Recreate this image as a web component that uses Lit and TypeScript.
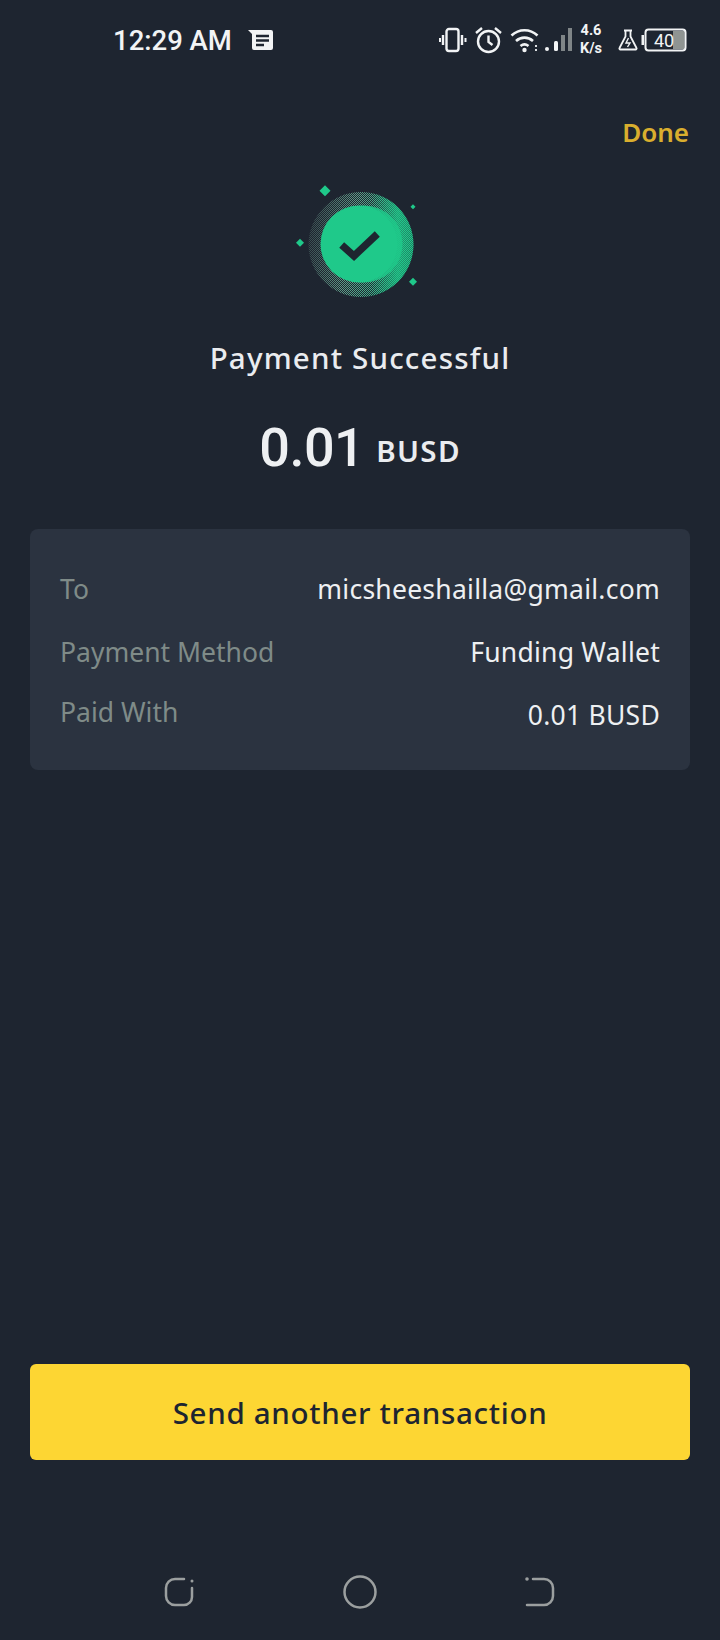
import { LitElement, html, css, svg } from "lit";
import { customElement } from "lit/decorators.js";

@customElement("app-root")
export class AppRoot extends LitElement {
  static styles = css`
    :host { display: block; width: 720px; height: 1640px; background: #1e2530; overflow: hidden; font-family: "Noto Sans", "Open Sans", sans-serif; color: #eaecef; }
    .page { display: flex; flex-direction: column; height: 1640px; }
    .status { height: 80px; display: flex; align-items: center; padding-left: 113px; flex: none; font-family: Roboto, sans-serif; color: #f2f4f5; }
    .time { font-size: 27.5px; font-weight: 500; width: 135px; white-space: nowrap; }
    .note { width: 26px; height: 24px; }
    .sicons { margin-left: auto; display: flex; align-items: center; padding-right: 33px; }
    .speed { font-size: 14.5px; font-weight: 700; line-height: 18px; text-align: center; width: 24px; margin: 0 15px 0 6px; }
    .done-row { display: flex; justify-content: flex-end; padding: 36px 31px 0 0; height: 56px; box-sizing: content-box; flex: none; }
    .done { color: #d9ae2e; font-size: 26px; font-weight: 600; line-height: 32px; }
    .badge { display: block; margin: 10px auto 0; width: 140px; height: 120px; flex: none; }
    .title { margin-top: 36px; text-align: center; font-size: 29.5px; font-weight: 500; line-height: 40px; letter-spacing: 1.2px; }
    .amount { display: flex; justify-content: center; align-items: baseline; gap: 12px; margin-top: 37px; line-height: 66px; }
    .num { font-family: Roboto, sans-serif; font-size: 54px; font-weight: 500; letter-spacing: -0.5px; color: #eef0f2; }
    .unit { font-size: 29.5px; font-weight: 600; letter-spacing: 1.3px; position: relative; top: -4px; }
    .card { margin: 41px 30px 0; background: #2b3340; border-radius: 8px; height: 241px; box-sizing: border-box; padding: 40px 30px; display: flex; flex-direction: column; gap: 23px; flex: none; }
    .row { display: flex; justify-content: space-between; font-size: 26.5px; line-height: 40px; }
    .lab { color: #7f8b88; }
    .val { color: #eef0f2; letter-spacing: 0.25px; }
    .raised { margin-top: -3px; }
    .btn { margin: auto 30px 0; height: 96px; border-radius: 6px; background: #fdd633; border: 0; color: #1e2530; font-family: inherit; font-size: 29.5px; font-weight: 500; letter-spacing: 0.7px; flex: none; }
    .nav { height: 180px; display: flex; align-items: flex-end; justify-content: space-between; padding: 0 163px 31px; box-sizing: border-box; flex: none; }
    .nav svg { width: 34px; height: 34px; display: block; }
  `;

  render() {
    return html`<div class="page">
      <div class="status">
        <span class="time">12:29 AM</span>
        <svg class="note" viewBox="0 0 26 24"><path fill="#f2f4f5" d="M0 2h23a2 2 0 0 1 2 2v16a2 2 0 0 1-2 2H6a2 2 0 0 1-2-2V6z"/><path stroke="#1e2530" stroke-width="2.400" d="M8 8h13M8 12.500h13M8 17h8"/></svg>
        <div class="sicons">
          <svg width="28" height="26" viewBox="0 0 28 26" fill="none" stroke="#f2f4f5"><rect x="7.500" y="2" width="12" height="22" rx="2.500" stroke-width="2.400"/><path stroke-width="2.400" d="M4 8v10M23 8v10"/><path stroke-width="2" d="M1 11v4M26.500 11v4"/></svg>
          <svg style="margin-left:7px" width="29" height="28" viewBox="0 0 29 28" fill="none" stroke="#f2f4f5" stroke-width="2.400"><circle cx="14.500" cy="15.500" r="10.500"/><path d="M14.500 9.500v6.500l4 3M2 7l6-5M27 7l-6-5"/></svg>
          <svg style="margin-left:7px" width="31" height="26" viewBox="0 0 31 26" fill="none" stroke="#f2f4f5" stroke-width="2.600"><path d="M1.500 8.500C9 1.500 20 1.500 27.500 8.500M6 14c5-4.500 12-4.500 17 0M10.500 19c2.500-2 5.500-2 8 0"/><circle cx="14.500" cy="23" r="2.200" fill="#f2f4f5" stroke="none"/><path stroke-width="1.800" d="M26 18v2M26 22v2"/></svg>
          <svg style="margin-left:2px" width="30" height="26" viewBox="0 0 30 26"><circle cx="4" cy="22" r="2" fill="#f2f4f5"/><rect x="11" y="14" width="4" height="10" rx="1.500" fill="#f2f4f5"/><rect x="18" y="8" width="4" height="16" fill="#7f8587"/><rect x="25" y="1" width="4" height="23" fill="#7f8587"/></svg>
          <div class="speed">4.6<br />K/s</div>
          <svg width="20" height="22" viewBox="0 0 20 22" fill="none" stroke="#f2f4f5" stroke-width="1.800"><path d="M6 1.500h8M7.500 1.500v6L1.500 19a1 1 0 0 0 1 1.500h15a1 1 0 0 0 1-1.500l-6-11.500v-6"/><path d="M10.500 9l-2.500 5h4l-2.500 4" stroke-width="1.400"/></svg>
          <svg style="margin-left:3px" width="46" height="24" viewBox="0 0 46 24">
            <rect x="0.500" y="7" width="2.500" height="10" fill="#f2f4f5"/>
            <rect x="32" y="3" width="11.500" height="18" fill="#8f9492"/>
            <rect x="4.500" y="1.500" width="40" height="21" rx="3" fill="none" stroke="#f2f4f5" stroke-width="2"/>
            ${svg`<text x="13" y="19" font-family="Roboto, sans-serif" font-size="18" fill="#f2f4f5">40</text>`}
          </svg>
        </div>
      </div>

      <div class="done-row"><span class="done">Done</span></div>

      <svg class="badge" viewBox="0 0 140 120">
        <defs>
          <linearGradient id="fade" x1="0" y1="0" x2="1" y2="0.150">
            <stop offset="0" stop-color="#323c44"/>
            <stop offset="0.450" stop-color="#5f9a87"/>
            <stop offset="1" stop-color="#25c98e"/>
          </linearGradient>
          <linearGradient id="wash" x1="0" y1="0" x2="1" y2="0">
            <stop offset="0.600" stop-color="#1fc98a" stop-opacity="0"/>
            <stop offset="0.850" stop-color="#1fc98a" stop-opacity="0.750"/>
            <stop offset="1" stop-color="#1fc98a" stop-opacity="0.500"/>
          </linearGradient>
          <pattern id="dots" width="2" height="2" patternUnits="userSpaceOnUse">
            <rect width="1" height="1" fill="#fff"/><rect x="1" y="1" width="1" height="1" fill="#fff"/>
          </pattern>
          <mask id="dither"><rect width="140" height="120" fill="url(#dots)"/></mask>
        </defs>
        <circle cx="71" cy="62.500" r="52.500" fill="url(#fade)" mask="url(#dither)"/>
        <circle cx="71" cy="62.500" r="52.500" fill="url(#wash)"/>
        <circle cx="74" cy="62" r="38.500" fill="#1fc98a" opacity="0.850"/>
        <circle cx="69" cy="62" r="38.500" fill="#1fc98a"/>
        <path d="M51.700 63l12.300 11 23.300-22" fill="none" stroke="#1e2530" stroke-width="7.300"/>
        <path fill="#1fc98a" d="M35 3.200l5.500 5.500-5.500 5.500-5.500-5.500zM10 56.700l4 4-4 4-4-4zM123 22.200l2.500 2.500-2.500 2.500-2.500-2.500zM123 95.700l4 4-4 4-4-4z"/>
      </svg>

      <div class="title">Payment Successful</div>
      <div class="amount"><span class="num">0.01</span><span class="unit">BUSD</span></div>

      <div class="card">
        <div class="row"><span class="lab">To</span><span class="val">micsheeshailla@gmail.com</span></div>
        <div class="row"><span class="lab">Payment Method</span><span class="val">Funding Wallet</span></div>
        <div class="row"><span class="lab raised">Paid With</span><span class="val">0.01 BUSD</span></div>
      </div>

      <button class="btn">Send another transaction</button>

      <div class="nav">
        <svg viewBox="0 0 34 34" fill="none" stroke="#9b9f9f" stroke-width="2.500" stroke-linecap="round"><path d="M21 4H12a9 9 0 0 0-9 9v8a9 9 0 0 0 9 9h9a8 8 0 0 0 8-8V13"/><circle cx="29" cy="6" r="1.500" fill="#9b9f9f" stroke="none"/></svg>
        <svg viewBox="0 0 34 34" fill="none" stroke="#9b9f9f" stroke-width="2.500"><circle cx="17" cy="17" r="15.500"/></svg>
        <svg viewBox="0 0 34 34" fill="none" stroke="#9b9f9f" stroke-width="2.500" stroke-linecap="round"><path d="M10 4h11a9 9 0 0 1 9 9v8a9 9 0 0 1-9 9H4"/><circle cx="4" cy="4" r="1.800" fill="#9b9f9f" stroke="none"/></svg>
      </div>
    </div>`;
  }
}
